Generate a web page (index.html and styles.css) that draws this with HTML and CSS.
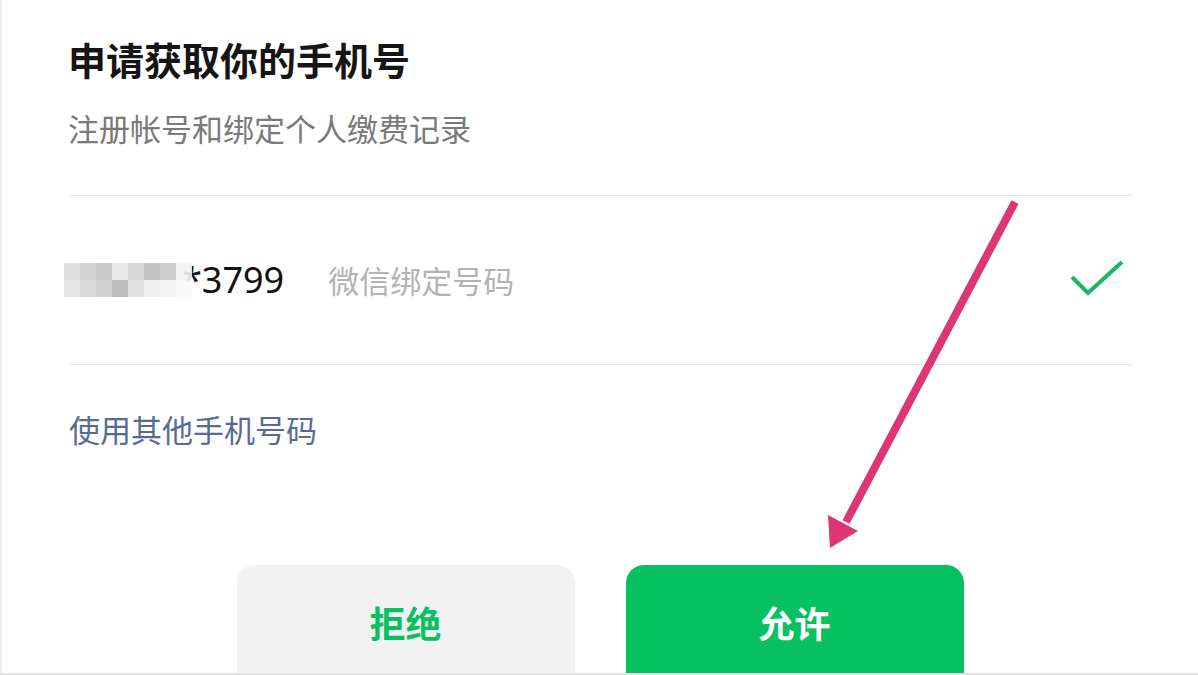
FILE: index.html
```html
<!DOCTYPE html>
<html lang="zh-CN">
<head>
<meta charset="utf-8">
<title>申请获取你的手机号</title>
<link rel="stylesheet" href="styles.css">
</head>
<body>
<div class="sheet">
  <h1 class="title">申请获取你的手机号</h1>
  <p class="desc">注册帐号和绑定个人缴费记录</p>
  <div class="divider"></div>
  <div class="phone-row">
    <div class="phone">
      <span class="mosaic">
        <span class="m" style="background:#dcdcdc"></span><span class="m" style="background:#cfcfcf"></span><span class="m" style="background:#c4c4c4"></span><span class="m" style="background:#e6e6e6"></span><span class="m" style="background:#d4d4d4"></span><span class="m" style="background:#bdbdbd"></span><span class="m" style="background:#c9c9c9"></span><span class="m" style="background:#f2f2f2"></span>
        <span class="m" style="background:#e2e2e2"></span><span class="m" style="background:#d8d8d8"></span><span class="m" style="background:#cdcdcd"></span><span class="m" style="background:#b8b8b8"></span><span class="m" style="background:#dedede"></span><span class="m" style="background:#ededed"></span><span class="m" style="background:#f5f5f5"></span><span class="m" style="background:#fafafa"></span>
      </span><span class="num">*3799</span>
    </div>
    <span class="tag">微信绑定号码</span>
    <svg class="check" width="56" height="40" viewBox="0 0 56 40"><path d="M3 18 L19 34 L53 3" fill="none" stroke="#1ab762" stroke-width="4"/></svg>
  </div>
  <div class="divider"></div>
  <a class="other">使用其他手机号码</a>
  <div class="actions">
    <div class="btn btn-deny">拒绝</div>
    <div class="btn btn-allow">允许</div>
  </div>
  <svg class="arrow" width="1198" height="675" viewBox="0 0 1198 675">
    <line x1="1015" y1="202" x2="846" y2="522" stroke="#dc3674" stroke-width="8"/>
    <polygon points="830,548 828,515 858,531" fill="#dc3674"/>
  </svg>
</div>
</body>
</html>
```
FILE: styles.css
```css
* { box-sizing: border-box; }
html, body {
  margin: 0;
  padding: 0;
  width: 1198px;
  height: 675px;
  overflow: hidden;
  background: #ffffff;
  font-family: "Noto Sans CJK SC", "Noto Sans", sans-serif;
}
.sheet {
  position: relative;
  width: 1198px;
  height: 675px;
  padding: 33px 66px 0 66px;
  border-left: 2px solid #ececec;
  border-bottom: 2px solid #e2e2e2;
  overflow: hidden;
  display: flex;
  flex-direction: column;
}
.title {
  margin: 0;
  font-size: 38px;
  line-height: 52px;
  font-weight: 700;
  color: #151515;
}
.desc {
  margin: 23px 0 0;
  font-size: 31px;
  line-height: 40px;
  color: #7a7a7a;
}
.divider {
  height: 1px;
  background: #e6e6e6;
  flex: none;
  margin-left: 2px;
}
.desc + .divider { margin-top: 47px; }
.phone-row {
  height: 168px;
  display: flex;
  align-items: center;
  flex: none;
}
.phone {
  display: flex;
  align-items: center;
  margin-left: -4px;
}
.mosaic {
  display: grid;
  grid-template-columns: repeat(8, 16px);
  grid-template-rows: 17px 17px;
  width: 128px;
  margin-right: -10px;
  position: relative;
  z-index: 1;
  opacity: 0.9;
}
.m { display: block; }
.num {
  font-family: "Noto Sans", sans-serif;
  font-size: 36px;
  line-height: 40px;
  color: #111;
}
.tag {
  margin-left: 44px;
  font-size: 31px;
  line-height: 40px;
  color: #b3b3b3;
}
.check {
  margin-left: auto;
  margin-right: 7px;
  margin-top: -2px;
}
.other {
  margin-top: 44px;
  font-size: 31px;
  line-height: 40px;
  color: #576b95;
  padding-left: 1px;
}
.actions {
  margin-top: 116px;
  display: flex;
  justify-content: center;
  gap: 51px;
  margin-left: -66px;
  margin-right: -66px;
}
.btn {
  width: 338px;
  height: 130px;
  border-radius: 18px;
  padding-top: 32px;
  font-size: 36px;
  line-height: 50px;
  font-weight: 700;
  text-align: center;
  flex: none;
}
.btn-deny { background: #f2f2f2; color: #07c160; }
.btn-allow { background: #07c160; color: #ffffff; }
.arrow {
  position: absolute;
  left: -2px;
  top: 0;
  pointer-events: none;
}
```
